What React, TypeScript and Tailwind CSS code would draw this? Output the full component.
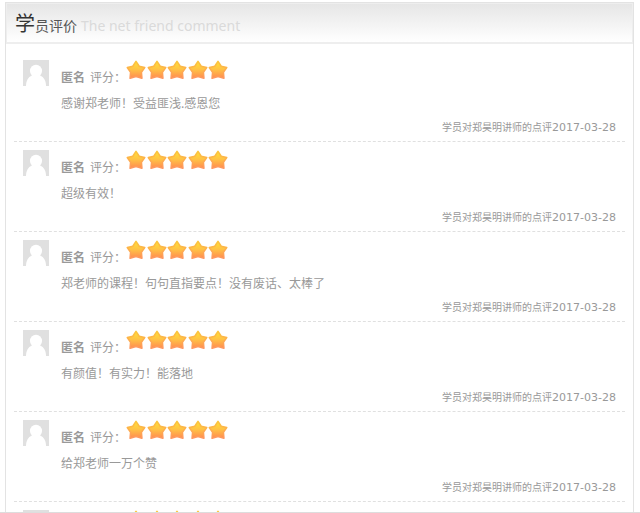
interface Review {
  id: number;
  author?: string;
  stars: number;
  content?: string;
  teacher?: string;
  date?: string;
}

const reviews: Review[] = [
  { id: 1, author: '匿名', stars: 5, content: '感谢郑老师！受益匪浅.感恩您', teacher: '郑昊明', date: '2017-03-28' },
  { id: 2, author: '匿名', stars: 5, content: '超级有效！', teacher: '郑昊明', date: '2017-03-28' },
  { id: 3, author: '匿名', stars: 5, content: '郑老师的课程！句句直指要点！没有废话、太棒了', teacher: '郑昊明', date: '2017-03-28' },
  { id: 4, author: '匿名', stars: 5, content: '有颜值！有实力！能落地', teacher: '郑昊明', date: '2017-03-28' },
  { id: 5, author: '匿名', stars: 5, content: '给郑老师一万个赞', teacher: '郑昊明', date: '2017-03-28' },
  { id: 6, stars: 5 },
];

function Avatar() {
  return (
    <svg viewBox="0 0 26 26" className="h-[26px] w-[26px] shrink-0" aria-hidden="true">
      <rect width="26" height="26" fill="#e0e0e0" />
      <path d="M3 26c0-5 2-9 6-10.500h8c4 1.500 6 5.500 6 10.500z" fill="#fff" />
      <ellipse cx="13" cy="11" rx="6" ry="6.300" fill="#fff" />
    </svg>
  );
}

function Star() {
  return (
    <svg viewBox="0 0 20 20" className="h-5 w-5" aria-hidden="true">
      <path
        d="M10 1.400L13.200 6.200L18.700 7.600L15.400 12.300L15.900 18.300L10 16.500L4.100 18.300L4.600 12.300L1.300 7.600L6.800 6.200Z"
        fill="url(#star-fill)"
        stroke="url(#star-edge)"
        strokeWidth="1.600"
        strokeLinejoin="round"
      />
    </svg>
  );
}

function ReviewItem({ review }: { review: Review }) {
  return (
    <li className="flex gap-3 border-b border-dashed border-[#e0e0e0] px-[9px] pt-2 pb-[3px]">
      <Avatar />
      <div className="min-w-0 flex-1 text-[#999]">
        <div className="flex h-[30px] items-start text-xs">
          {review.author && (
            <p className="flex w-[65px] gap-[5px] pt-2 leading-[18px] whitespace-nowrap">
              <strong className="font-bold">{review.author}</strong>
              <span>评分：</span>
            </p>
          )}
          <div
            className={review.author ? 'flex w-[102px] justify-between' : 'ml-[65px] flex w-[102px] justify-between'}
            role="img"
            aria-label={`${review.stars}星`}
          >
            {Array.from({ length: review.stars }, (_, i) => (
              <Star key={i} />
            ))}
          </div>
        </div>
        {review.content && <p className="text-xs leading-[26px]">{review.content}</p>}
        {review.date && (
          <p className="flex h-[22px] items-baseline justify-end text-[10px] leading-[22px]">
            <span>学员对{review.teacher}讲师的点评</span>
            <time dateTime={review.date} className="font-['DejaVu_Sans',sans-serif] text-[11px]">{review.date}</time>
          </p>
        )}
      </div>
    </li>
  );
}

export default function App() {
  return (
    <div lang="zh-CN" className="h-screen overflow-hidden border-b border-[#ddd] bg-white pt-0.5 pr-1.5 pl-[5px] font-['Noto_Sans_CJK_SC',sans-serif]">
      {/* 星星共用的渐变 */}
      <svg width="0" height="0" className="absolute" aria-hidden="true">
        <defs>
          <linearGradient id="star-fill" x1="0" y1="0" x2="0" y2="1">
            <stop offset="0.1" stopColor="#ffdc38" />
            <stop offset="0.5" stopColor="#ffc046" />
            <stop offset="1" stopColor="#ff8a50" />
          </linearGradient>
          <linearGradient id="star-edge" x1="0" y1="0" x2="0" y2="1">
            <stop offset="0" stopColor="#fcc63c" />
            <stop offset="1" stopColor="#ff9660" />
          </linearGradient>
        </defs>
      </svg>

      <section className="border border-b-0 border-[#e3e3e3]">
        <header className="border border-b-2 border-[#eee] bg-linear-to-b from-[#e6e6e6] to-white">
          <h2 className="flex h-[38px] items-baseline pl-2 text-sm leading-[38px] text-[#555]">
            <span className="text-xl leading-[38px] text-[#333]">学</span>
            员评价
            <span className="ml-1 font-['Noto_Sans',sans-serif] text-[#dadada]">The net friend comment</span>
          </h2>
        </header>
        <ul className="px-2 pt-2">
          {reviews.map((review) => (
            <ReviewItem key={review.id} review={review} />
          ))}
        </ul>
      </section>
    </div>
  );
}
